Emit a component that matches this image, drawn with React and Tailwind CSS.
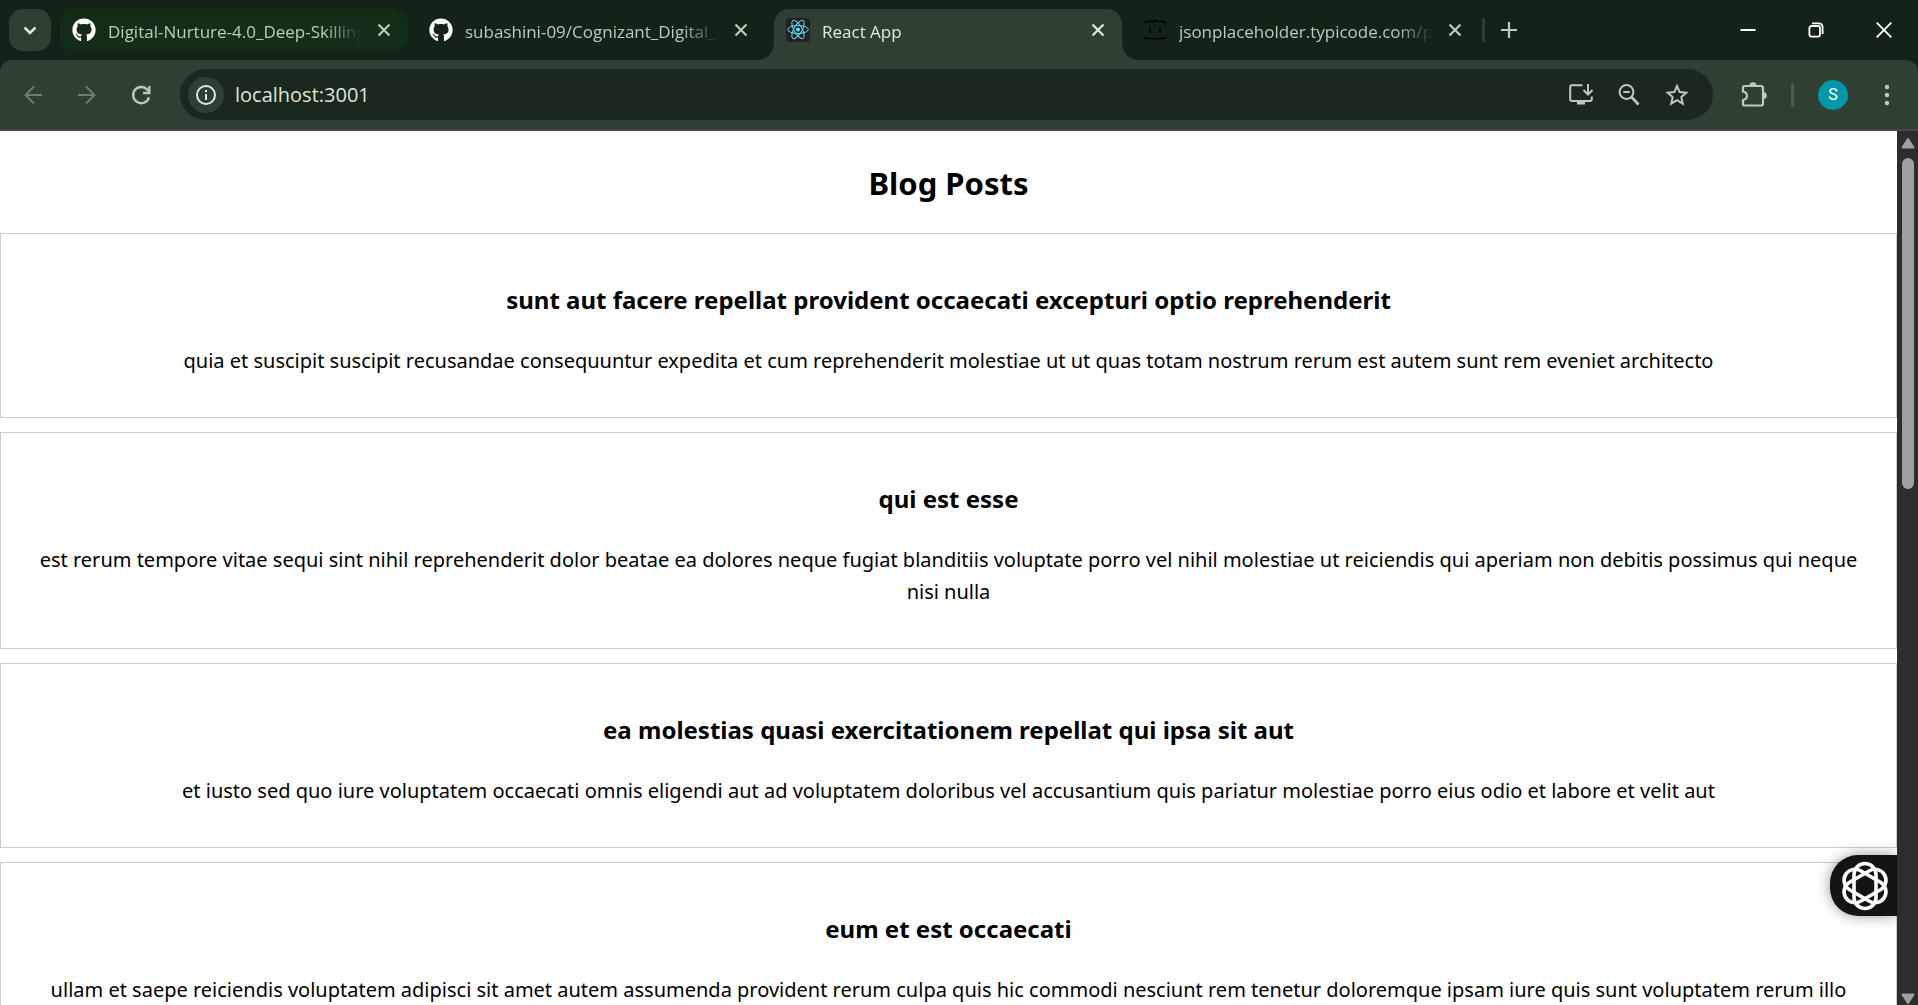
import React from "react";
import { FaGithub } from "react-icons/fa";

const posts = [
  {
    title: "sunt aut facere repellat provident occaecati excepturi optio reprehenderit",
    body: "quia et suscipit suscipit recusandae consequuntur expedita et cum reprehenderit molestiae ut ut quas totam nostrum rerum est autem sunt rem eveniet architecto",
  },
  {
    title: "qui est esse",
    body: "est rerum tempore vitae sequi sint nihil reprehenderit dolor beatae ea dolores neque fugiat blanditiis voluptate porro vel nihil molestiae ut reiciendis qui aperiam non debitis possimus qui neque nisi nulla",
  },
  {
    title: "ea molestias quasi exercitationem repellat qui ipsa sit aut",
    body: "et iusto sed quo iure voluptatem occaecati omnis eligendi aut ad voluptatem doloribus vel accusantium quis pariatur molestiae porro eius odio et labore et velit aut",
  },
  {
    title: "eum et est occaecati",
    body: "ullam et saepe reiciendis voluptatem adipisci sit amet autem assumenda provident rerum culpa quis hic commodi nesciunt rem tenetur doloremque ipsam iure quis sunt voluptatem rerum illo velit",
  },
];

function Svg({ size = 24, width = 2, className = "", children }) {
  return (
    <svg
      width={size}
      height={size}
      viewBox={`0 0 ${size} ${size}`}
      fill="none"
      stroke="currentColor"
      strokeWidth={width}
      className={`shrink-0 ${className}`}
      aria-hidden="true"
    >
      {children}
    </svg>
  );
}

function ReactIcon() {
  return (
    <svg width="24" height="24" viewBox="0 0 24 24" className="shrink-0" aria-hidden="true">
      <rect width="24" height="24" rx="3" fill="#222225" />
      <g fill="none" stroke="#61dafb" strokeWidth="1">
        <ellipse cx="12" cy="11.5" rx="10.3" ry="4" />
        <ellipse cx="12" cy="11.5" rx="10.3" ry="4" transform="rotate(60 12 11.5)" />
        <ellipse cx="12" cy="11.5" rx="10.3" ry="4" transform="rotate(120 12 11.5)" />
      </g>
      <circle cx="12" cy="11.5" r="2" fill="#61dafb" />
    </svg>
  );
}

function BracesIcon() {
  return (
    <Svg width={1.4} className="text-black">
      <path d="M1.5 5.5V4.5Q2 3.5 4 3.5H9.5Q11.5 3.5 12 2Q12.5 3.5 14.5 3.5H20Q22 3.5 22.5 4.5V5.5" />
      <path d="M1.5 18.5V19.5Q2 20.5 4 20.5H9.5Q11.5 20.5 12 22Q12.5 20.5 14.5 20.5H20Q22 20.5 22.5 19.5V18.5" />
      <path d="M7 9v6M17 9v6" />
    </Svg>
  );
}

function CloseIcon() {
  return (
    <Svg size={14} width={2.2}>
      <path d="M1.5 1.5l11 11M12.5 1.5l-11 11" />
    </Svg>
  );
}

function Tab({ icon, label, tone }) {
  const active = tone === "active";
  const look = active
    ? "relative h-[51px] rounded-t-[15px] bg-[#2f3f32] pb-[9px] text-[#e1e8dd]"
    : tone === "grouped"
      ? "h-[42px] rounded-[15px] bg-[#142d19] text-[#b9ccb6]"
      : "h-[42px] text-[#b9ccb6]";
  return (
    <div className={`flex w-[348px] min-w-0 items-center gap-3 pl-3 pr-[17px] ${look}`}>
      {active && (
        <>
          <span className="absolute bottom-0 -left-[15px] size-[15px] bg-[radial-gradient(circle_at_0_0,#142317_14px,#2f3f32_15px)]" />
          <span className="absolute bottom-0 -right-[15px] size-[15px] bg-[radial-gradient(circle_at_100%_0,#142317_14px,#2f3f32_15px)]" />
        </>
      )}
      {icon}
      <button
        type="button"
        className="min-w-0 flex-1 overflow-hidden whitespace-nowrap pt-1 text-left text-[17px] leading-6 [mask-image:linear-gradient(to_right,black_calc(100%-36px),transparent)]"
      >
        {label}
      </button>
      <button type="button" aria-label={`Close ${label}`} className="ml-1 flex">
        <CloseIcon />
      </button>
    </div>
  );
}

function TabStrip() {
  return (
    <header className="flex h-[60px] items-start bg-[#142317] pl-[9px] pt-[9px]">
      <button
        type="button"
        aria-label="Search tabs"
        className="mr-[9px] flex size-[42px] shrink-0 items-center justify-center rounded-[14px] bg-[#2f3f32] text-[#e1e8dd]"
      >
        <Svg size={14} width={2.5}>
          <path d="M1.5 4.5L7 10l5.5-5.5" />
        </Svg>
      </button>
      <nav className="flex min-w-0 gap-[9px]">
        <Tab icon={<FaGithub className="size-6 shrink-0 text-white" />} label="Digital-Nurture-4.0_Deep-Skilling" tone="grouped" />
        <Tab icon={<FaGithub className="size-6 shrink-0 text-white" />} label="subashini-09/Cognizant_Digital_Nurture" tone="plain" />
        <Tab icon={<ReactIcon />} label="React App" tone="active" />
        <Tab icon={<BracesIcon />} label="jsonplaceholder.typicode.com/posts" tone="plain" />
      </nav>
      <div className="ml-[3px] mt-[9px] h-6 w-[3px] shrink-0 rounded-full bg-[#2f3f32]" />
      <button type="button" aria-label="New tab" className="ml-4 mt-[13px] flex text-[#b9ccb6]">
        <Svg size={16} width={2.2}>
          <path d="M8 0v16M0 8h16" />
        </Svg>
      </button>
      <div className="ml-auto flex h-[41px] text-white">
        <button type="button" aria-label="Minimize" className="flex w-[68px] items-center justify-center">
          <Svg size={16} width={2}>
            <path d="M0.5 8h15" />
          </Svg>
        </button>
        <button type="button" aria-label="Restore" className="flex w-[68px] items-center justify-center">
          <Svg size={16} width={1.8}>
            <rect x="1.4" y="4" width="10.6" height="10.6" rx="2" />
            <path d="M4 1.4H10.5Q14.6 1.4 14.6 5.5V12" />
          </Svg>
        </button>
        <button type="button" aria-label="Close window" className="flex w-[68px] items-center justify-center">
          <Svg size={16} width={1.8}>
            <path d="M0.7 0.7l14.6 14.6M15.3 0.7L0.7 15.3" />
          </Svg>
        </button>
      </div>
    </header>
  );
}

function Toolbar() {
  return (
    <div className="bg-[#142317]">
      <div className="flex h-[71px] items-center rounded-t-[12px] border-b-2 border-[#444c41] bg-[#2f3f32] pl-[21px] pr-[19px] text-[#b9ccb6]">
        <div className="flex gap-[30px]">
          <button type="button" aria-label="Back" className="flex text-[#6f7d6d]">
            <Svg>
              <path d="M21 12H5M13 3.5L4.5 12l8.5 8.5" />
            </Svg>
          </button>
          <button type="button" aria-label="Forward" className="flex text-[#6f7d6d]">
            <Svg>
              <path d="M3 12h16M11 3.5l8.5 8.5-8.5 8.5" />
            </Svg>
          </button>
          <button type="button" aria-label="Reload" className="flex">
            <Svg width={2.4}>
              <path d="M20 14.3A8.1 8.1 0 1 1 18.3 6.7L20.5 9" />
              <path d="M20.3 3v7H14" />
            </Svg>
          </button>
        </div>
        <div className="ml-[27px] flex h-[51px] min-w-0 flex-1 items-center rounded-full bg-[#1b281d] pl-2 pr-6 text-[#c1c9be]">
          <button
            type="button"
            aria-label="View site information"
            className="mr-[11px] flex size-9 shrink-0 items-center justify-center rounded-full bg-[#2f3f32] text-[#e1e8dd]"
          >
            <Svg size={20}>
              <circle cx="10" cy="10" r="9" />
              <path d="M10 9v6M10 5v2.2" />
            </Svg>
          </button>
          <input
            type="text"
            aria-label="Address"
            defaultValue="localhost:3001"
            className="min-w-0 flex-1 bg-transparent text-[20px] leading-7 text-[#dde5da] outline-none"
          />
          <div className="flex gap-6">
            <button type="button" aria-label="Install app" className="flex">
              <Svg>
                <path d="M13.5 2.2H3Q1.2 2.2 1.2 4V16Q1.2 18 3 18H21Q22.8 18 22.8 16V13.5" />
                <path d="M19 1v10M14.5 7L19 11.5l4.5-4.5" />
                <path d="M8 18.5h8v3H8z" fill="currentColor" stroke="none" />
              </Svg>
            </button>
            <button type="button" aria-label="Zoom out" className="flex">
              <Svg>
                <circle cx="9.5" cy="9" r="6.9" />
                <path d="M14.5 14l7 7.5" strokeWidth={2.6} />
                <path d="M6.3 9h6.4" />
              </Svg>
            </button>
            <button type="button" aria-label="Bookmark this page" className="flex">
              <Svg>
                <path d="M12 3l2.7 6.1 6.6.6-5 4.4 1.5 6.5L12 17.2l-5.8 3.4 1.5-6.5-5-4.4 6.6-.6z" />
              </Svg>
            </button>
          </div>
        </div>
        <button type="button" aria-label="Extensions" className="ml-7 flex">
          <svg width="26" height="26" viewBox="0 0 26 26" fill="none" stroke="currentColor" strokeWidth="2.2" aria-hidden="true">
            <path d="M3.5 4H20Q22 4 22 6V21.5Q22 23.5 20 23.5H3.5Q2 23.5 2 22V18Q6 17 6 13.7T2 9.5V5.5Q2 4 3.5 4Z" />
            <path d="M8.5 3.5a3.5 3.2 0 0 1 7 0zM22.5 10a3.2 3.5 0 0 1 0 7z" fill="currentColor" stroke="none" />
          </svg>
        </button>
        <div className="ml-6 h-6 w-[3px] rounded-full bg-[#4b5a4b]" />
        <button
          type="button"
          aria-label="Profile"
          className="ml-6 flex size-[30px] items-center justify-center rounded-full bg-[#0097a7] font-[Roboto,sans-serif] text-base text-white"
        >
          S
        </button>
        <button type="button" aria-label="Menu" className="ml-[27px] flex">
          <Svg>
            <g fill="currentColor" stroke="none">
              <circle cx="12" cy="4" r="2.2" />
              <circle cx="12" cy="12" r="2.2" />
              <circle cx="12" cy="20" r="2.2" />
            </g>
          </Svg>
        </button>
      </div>
    </div>
  );
}

function Scrollbar() {
  return (
    <div className="flex w-[21px] shrink-0 flex-col items-center bg-[#2c2c2c] pt-1 pl-px">
      <svg width="14" height="16" viewBox="0 0 14 16" aria-hidden="true">
        <path d="M7 4L12.5 12.5H1.5Z" fill="#9f9f9f" stroke="#9f9f9f" strokeWidth="2" strokeLinejoin="round" />
      </svg>
      <div className="mt-[7px] h-[38%] w-3 rounded-full bg-[#9f9f9f]" />
      <svg width="14" height="16" viewBox="0 0 14 16" className="mt-auto" aria-hidden="true">
        <path d="M7 14L12.5 5.5H1.5Z" fill="#9f9f9f" stroke="#9f9f9f" strokeWidth="2" strokeLinejoin="round" />
      </svg>
    </div>
  );
}

function AssistantButton() {
  return (
    <button
      type="button"
      aria-label="Open assistant"
      className="absolute right-0 bottom-[89px] flex h-[61px] w-[67px] items-center rounded-l-[28px] bg-[#141414] pl-[10px] shadow-[0_0_14px_rgba(0,0,0,0.4)]"
    >
      <svg width="50" height="50" viewBox="0 0 50 50" fill="none" stroke="white" strokeWidth="3.6" aria-hidden="true">
        <rect x="14" y="2.5" width="22" height="45" rx="11" />
        <rect x="14" y="2.5" width="22" height="45" rx="11" transform="rotate(60 25 25)" />
        <rect x="14" y="2.5" width="22" height="45" rx="11" transform="rotate(120 25 25)" />
      </svg>
    </button>
  );
}

export default function App() {
  return (
    <div className="flex h-screen flex-col overflow-hidden bg-white font-['Open_Sans','Noto_Sans',sans-serif]">
      <TabStrip />
      <Toolbar />
      <div className="relative flex min-h-0 flex-1">
        <main className="relative min-w-0 flex-1 overflow-hidden text-center font-['Noto_Sans',sans-serif] text-black">
          <h1 className="pt-7 pb-[26px] text-[31px] leading-[48px] font-bold">Blog Posts</h1>
          <div className="flex flex-col gap-[14px]">
            {posts.map((post) => (
              <article key={post.title} className="border border-[#cccccc] px-[30px] pt-12 pb-10">
                <h2 className="text-2xl leading-9 font-bold">{post.title}</h2>
                <p className="mt-[27px] text-[20px] leading-8">{post.body}</p>
              </article>
            ))}
          </div>
          <AssistantButton />
        </main>
        <Scrollbar />
      </div>
    </div>
  );
}
